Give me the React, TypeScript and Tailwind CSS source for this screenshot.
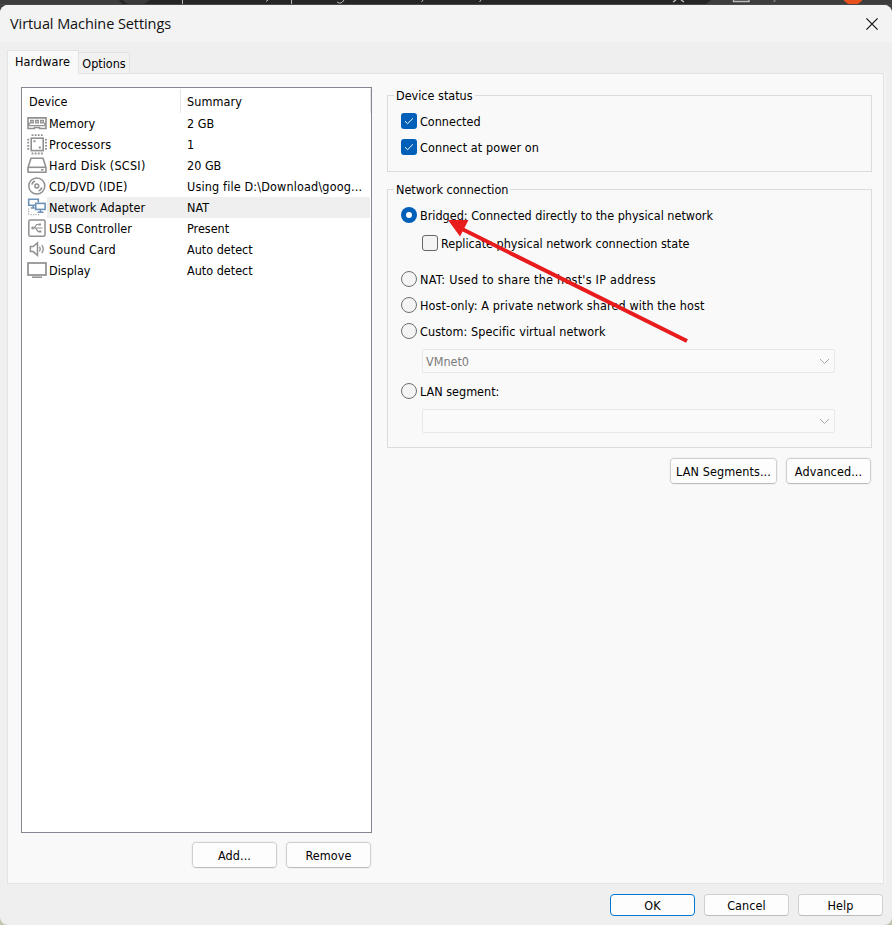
import React, { useState } from 'react';
import clsx from 'clsx';

const MemoryIcon = () => (
  <svg width="20" height="21" viewBox="0 0 20 21" fill="none" stroke="#909090">
    <path d="M1 4.900h18v5.300h-1v1.300h1v4H12.500v-1h-5v1H1v-4h1v-1.300H1z" strokeWidth="1.600" />
    <path d="M3.700 7.500h2.600v2.300H3.700zM8.700 7.500h2.600v2.300H8.700zM13.700 7.500h2.600v2.300h-2.600z" strokeWidth="1.300" />
    <path d="M2 12.600h16" strokeWidth="1.200" />
  </svg>
);

const ProcessorIcon = () => (
  <svg width="20" height="21" viewBox="0 0 20 21" fill="none" stroke="#909090">
    <rect x="4.200" y="4.200" width="12" height="12.400" strokeWidth="1.600" />
    <path d="M4.600 1.200h11.400M4.600 19.500h11.400" strokeWidth="1.800" strokeDasharray="1.800 1.300" />
    <path d="M1.200 4.700v11.400M19 4.700v11.400" strokeWidth="1.800" strokeDasharray="1.800 1.300" />
    <path d="M6.500 7.300h2M11.800 13.600h2" strokeWidth="2" />
  </svg>
);

const DiskIcon = () => (
  <svg width="20" height="21" viewBox="0 0 20 21" fill="none" stroke="#909090" strokeWidth="1.600">
    <path d="M4 3.200h12l3 9.300v4.700H1v-4.700z" strokeLinejoin="round" />
    <path d="M1 12.300h18" />
    <path d="M14 14.800h2.500" />
  </svg>
);

const DiscIcon = () => (
  <svg width="20" height="21" viewBox="0 0 20 21" fill="none" stroke="#909090" strokeWidth="1.500">
    <circle cx="9.800" cy="10" r="8" />
    <circle cx="9.800" cy="10" r="1.900" />
    <path d="M4.800 8.600c.5-1.800 1.600-3 3.200-3.600M14.800 11.400c-.5 1.800-1.600 3-3.200 3.600" strokeWidth="1.700" />
  </svg>
);

const NetworkIcon = () => (
  <svg width="20" height="21" viewBox="0 0 20 21" fill="none" stroke="#6c93b5" strokeWidth="1.600">
    <path d="M8.200 8.200H1.700V2.200h9.600v3.200M6.200 8.500v2.300M3.800 11h4" />
    <rect x="8.700" y="6.400" width="9.400" height="6" />
    <path d="M13.500 12.500v2.400M10.500 15.200h6" />
    <path d="M1.600 11.500v7M3.500 17.700h9" stroke="#aaa" strokeWidth="1.200" strokeDasharray="1.200 1.300" />
  </svg>
);

const UsbIcon = () => (
  <svg width="20" height="21" viewBox="0 0 20 21" fill="none" stroke="#909090" strokeWidth="1.500">
    <rect x="1.800" y="1.900" width="16.200" height="16.400" rx="1.500" />
    <path d="M5 10h10.500M7 10l2.800-3.500h2M8.500 10l2.600 3.600h1.400" strokeWidth="1.200" />
    <path d="M6.500 7.900v4.200L3.600 10zM11.500 5.500h2.400v2.100h-2.400zM12 12.500h2.400v2.100H12z" fill="#909090" stroke="none" />
  </svg>
);

const SoundIcon = () => (
  <svg width="20" height="21" viewBox="0 0 20 21" fill="none" stroke="#909090" strokeWidth="1.500">
    <path d="M3.400 7.600h2.700l4.400-3.700v12.400l-4.400-3.700H3.400z" />
    <path d="M12.500 7.700c1 1.500 1 3.300 0 4.800M14.800 6.200c1.800 2.500 1.800 5.500 0 7.800" strokeWidth="1.300" />
  </svg>
);

const DisplayIcon = () => (
  <svg width="20" height="21" viewBox="0 0 20 21" fill="none" stroke="#909090" strokeWidth="1.700">
    <rect x="1" y="3" width="18" height="12" />
    <path d="M5 17.200h10" strokeWidth="1.500" />
  </svg>
);

const devices = [
  { name: 'Memory', summary: '2 GB', icon: MemoryIcon, tracking: 'tracking-[0.1px]' },
  { name: 'Processors', summary: '1', icon: ProcessorIcon, tracking: 'tracking-[0.24px]' },
  { name: 'Hard Disk (SCSI)', summary: '20 GB', icon: DiskIcon, tracking: 'tracking-[0.26px]' },
  { name: 'CD/DVD (IDE)', summary: 'Using file D:\\Download\\goog...', icon: DiscIcon, tracking: 'tracking-[0.16px]' },
  { name: 'Network Adapter', summary: 'NAT', icon: NetworkIcon, tracking: 'tracking-[0.07px]' },
  { name: 'USB Controller', summary: 'Present', icon: UsbIcon, tracking: 'tracking-[0.08px]' },
  { name: 'Sound Card', summary: 'Auto detect', icon: SoundIcon, tracking: 'tracking-[0.15px]' },
  { name: 'Display', summary: 'Auto detect', icon: DisplayIcon, tracking: 'tracking-normal' }
];

interface OptionProps {
  label: string;
  checked: boolean;
  onChange: () => void;
  className?: string;
}

const CheckOption: React.FC<OptionProps> = ({ label, checked, onChange, className }) => (
  <button role="checkbox" aria-checked={checked} onClick={onChange} className={clsx('flex h-4 items-center gap-[3px]', className)}>
    <span
      className={clsx(
        'flex size-4 items-center justify-center rounded-[3px]',
        checked ? 'bg-[#005fb8]' : 'border border-[#666] bg-[#f4f4f4]'
      )}
    >
      {checked && (
        <svg width="10" height="8" viewBox="0 0 10 8" fill="none" stroke="#fff" strokeWidth="1">
          <path d="M1 4.200l2.600 2.500L9 1.300" />
        </svg>
      )}
    </span>
    <span className="pt-0.5">{label}</span>
  </button>
);

const RadioOption: React.FC<OptionProps> = ({ label, checked, onChange, className }) => (
  <button role="radio" aria-checked={checked} onClick={onChange} className={clsx('flex h-4 items-center gap-[3px]', className)}>
    <span
      className={clsx(
        'flex size-4 items-center justify-center rounded-full',
        checked ? 'bg-[#005fb8]' : 'border border-[#707070] bg-[#f4f4f4]'
      )}
    >
      {checked && <span className="size-1.5 rounded-full bg-white" />}
    </span>
    <span className="pt-0.5">{label}</span>
  </button>
);

const ComboBox: React.FC<{ value?: string; className?: string }> = ({ value, className }) => (
  <div
    className={clsx(
      'ml-[21px] flex h-6 w-[413px] items-center justify-between rounded-[2px] border border-[#e8e8e8] bg-[#fafafa] pr-1 pl-[3px] text-[#7a7a7a]',
      className
    )}
  >
    <span className="pt-0.5">{value}</span>
    <svg width="11" height="7" viewBox="0 0 11 7" fill="none" stroke="#a8a8a8">
      <path d="M1 1l4.500 4.500L10 1" />
    </svg>
  </div>
);

const GroupBox: React.FC<{ title: string; className?: string; children: React.ReactNode }> = ({
  title,
  className,
  children
}) => (
  <fieldset className={clsx('w-[485px] border border-[#dcdcdc] pl-[13px]', className)}>
    <legend className="-ml-[7px] h-[15px] px-[2px] leading-4">{title}</legend>
    {children}
  </fieldset>
);

const PushButton: React.FC<{ label: string; className?: string }> = ({ label, className }) => (
  <button
    className={clsx(
      'flex items-center justify-center rounded-[4px] border bg-[#fdfdfd] pt-0.5 tracking-[0.1px]',
      className
    )}
  >
    {label}
  </button>
);

export default function App() {
  const [selected, setSelected] = useState('Network Adapter');
  const [connected, setConnected] = useState(true);
  const [powerOn, setPowerOn] = useState(true);
  const [replicate, setReplicate] = useState(false);
  const [mode, setMode] = useState('bridged');

  return (
    <div className="relative flex h-[925px] w-[892px] flex-col overflow-hidden bg-[linear-gradient(#3d3d3d_20px,#c3c5b0_20px)] font-['DejaVu_Sans_Condensed','DejaVu_Sans',sans-serif] text-[12.5px] text-black">
      {/* Window behind the dialog */}
      <div className="flex h-[5px] shrink-0 border-b border-[#4a4a4a] bg-[#3d3d3d]">
        <svg width="892" height="4" viewBox="0 0 892 4">
          <path d="M119 0h592l-5 4H122z" fill="#252525" />
          <path d="M122 0h28l-6 4h-16z" fill="#3a3a3a" />
          <path d="M182.500 0v4M291.500 0v4M268 0l-2 1.500M423 0l-1.500 2M481 0l-1.500 2" stroke="#bbb" />
          <path d="M337 2q4 3 7-2" stroke="#bbb" fill="none" />
          <path d="M673 2l3-2M684 2l-3-2M733.500 0v1.500h15.500V0" stroke="#bbb" fill="none" strokeWidth="1.400" />
          <path d="M774.500 0v2" stroke="#777" strokeWidth="2" />
          <circle cx="853" cy="-6" r="11" fill="#e8501c" />
        </svg>
      </div>

      <div className="flex flex-1 flex-col rounded-[8px] bg-[#efefef]">
        {/* Title bar */}
        <div className="flex h-[37px] shrink-0 items-center justify-between rounded-t-[8px] bg-[#f3f3f3] pr-[14px] pl-[10px]">
          <h1 className="font-['Open_Sans','Noto_Sans',sans-serif] text-[14.5px] tracking-[-0.08px] text-[#111]">Virtual Machine Settings</h1>
          <button aria-label="Close">
            <svg width="12" height="12" viewBox="0 0 12 12" stroke="#111" strokeWidth="1.200">
              <path d="M.4.4l11.200 11.200M11.600.4L.4 11.600" />
            </svg>
          </button>
        </div>

        {/* Tabs */}
        <div className="flex h-[31px] items-end pl-[7px]">
          <button className="z-10 -mb-px flex h-6 w-[72px] items-center justify-center border border-b-0 border-[#e3e3e3] bg-[#f9f9f9] pr-px tracking-[0.12px]">
            Hardware
          </button>
          <button className="-ml-px flex h-[21px] w-[52px] items-center justify-center border border-b-0 border-[#e3e3e3] bg-[#f1f1f1] pt-0.5">
            Options
          </button>
        </div>

        <div className="ml-[7px] flex h-[811px] w-[877px] border border-[#e3e3e3] bg-[#f9f9f9] shadow-[2px_0_0_#f3f3f3]">
          {/* Device list */}
          <div className="mt-[13px] ml-[13px] w-[351px]">
            <div className="h-[746px] border border-[#828790] bg-white">
              <div className="flex h-[25px] items-end">
                <div className="flex h-6 w-[159px] items-center border-r border-[#e5e5e5] pt-0.5 pl-[7px]">Device</div>
                <div className="flex h-6 w-[190px] items-center border-r border-[#e5e5e5] pt-0.5 pl-[6px] tracking-[0.08px]">Summary</div>
              </div>
              {devices.map(({ name, summary, icon: Icon, tracking }) => (
                <div key={name} onClick={() => setSelected(name)} className="flex h-[21px] pr-px pl-[5px]">
                  <Icon />
                  <div className={clsx('flex flex-1 items-center pt-0.5 pl-[2px]', selected === name && 'bg-[#efefef]')}>
                    <span className={clsx('w-[138px]', tracking)}>{name}</span>
                    <span className={clsx(summary.length > 12 && 'tracking-[0.16px]')}>{summary}</span>
                  </div>
                </div>
              ))}
            </div>
            <div className="mt-[9px] flex justify-end gap-[9px] pr-px">
              <PushButton label="Add..." className="h-[26px] w-[85px] border-[#d0d0d0] border-b-[#bcbcbc] outline outline-[#f1f1f1]" />
              <PushButton label="Remove" className="h-[26px] w-[85px] border-[#d0d0d0] border-b-[#bcbcbc] outline outline-[#f1f1f1]" />
            </div>
          </div>

          {/* Device settings */}
          <div className="mt-[14px] ml-[15px] w-[485px]">
            <GroupBox title="Device status" className="h-[84px]">
              <CheckOption label="Connected" checked={connected} onChange={() => setConnected(!connected)} className="mt-[10px]" />
              <CheckOption
                label="Connect at power on"
                checked={powerOn}
                onChange={() => setPowerOn(!powerOn)}
                className="mt-[10px] tracking-[0.09px]"
              />
            </GroupBox>

            <GroupBox title="Network connection" className="mt-[10px] h-[266px]">
              <RadioOption
                label="Bridged: Connected directly to the physical network"
                checked={mode === 'bridged'}
                onChange={() => setMode('bridged')}
                className="mt-[10px]"
              />
              <CheckOption
                label="Replicate physical network connection state"
                checked={replicate}
                onChange={() => setReplicate(!replicate)}
                className="mt-3 ml-[21px]"
              />
              <RadioOption
                label="NAT: Used to share the host's IP address"
                checked={mode === 'nat'}
                onChange={() => setMode('nat')}
                className="mt-5 tracking-[0.25px]"
              />
              <RadioOption
                label="Host-only: A private network shared with the host"
                checked={mode === 'host'}
                onChange={() => setMode('host')}
                className="mt-[10px] tracking-[0.1px]"
              />
              <RadioOption
                label="Custom: Specific virtual network"
                checked={mode === 'custom'}
                onChange={() => setMode('custom')}
                className="mt-[10px] tracking-[0.08px]"
              />
              <ComboBox value="VMnet0" className="mt-[10px]" />
              <RadioOption
                label="LAN segment:"
                checked={mode === 'lan'}
                onChange={() => setMode('lan')}
                className="mt-[10px]"
              />
              <ComboBox className="mt-[10px]" />
            </GroupBox>

            <div className="mt-[10px] flex justify-end gap-[9px] pr-px">
              <PushButton label="LAN Segments..." className="h-[26px] w-[107px] border-[#d0d0d0] border-b-[#bcbcbc] outline outline-[#f1f1f1]" />
              <PushButton label="Advanced..." className="h-[26px] w-[85px] border-[#d0d0d0] border-b-[#bcbcbc] outline outline-[#f1f1f1]" />
            </div>
          </div>
        </div>

        {/* Dialog buttons */}
        <div className="mt-[10px] flex justify-end gap-[9px] pr-[9px]">
          <PushButton label="OK" className="h-[22px] w-[85px] border-[#0078d4]" />
          <PushButton label="Cancel" className="h-[22px] w-[85px] border-[#d0d0d0] border-b-[#bcbcbc]" />
          <PushButton label="Help" className="h-[22px] w-[85px] border-[#d0d0d0] border-b-[#bcbcbc]" />
        </div>
      </div>

      {/* Arrow pointing at the bridged option */}
      <svg className="pointer-events-none absolute top-[215px] left-[445px]" width="246" height="130" viewBox="0 0 246 130">
        <path d="M15 13L242 126" stroke="#e81c1c" strokeWidth="4" />
        <path d="M3 5h20.500L15 21.500z" fill="#e81c1c" />
      </svg>
    </div>
  );
}
